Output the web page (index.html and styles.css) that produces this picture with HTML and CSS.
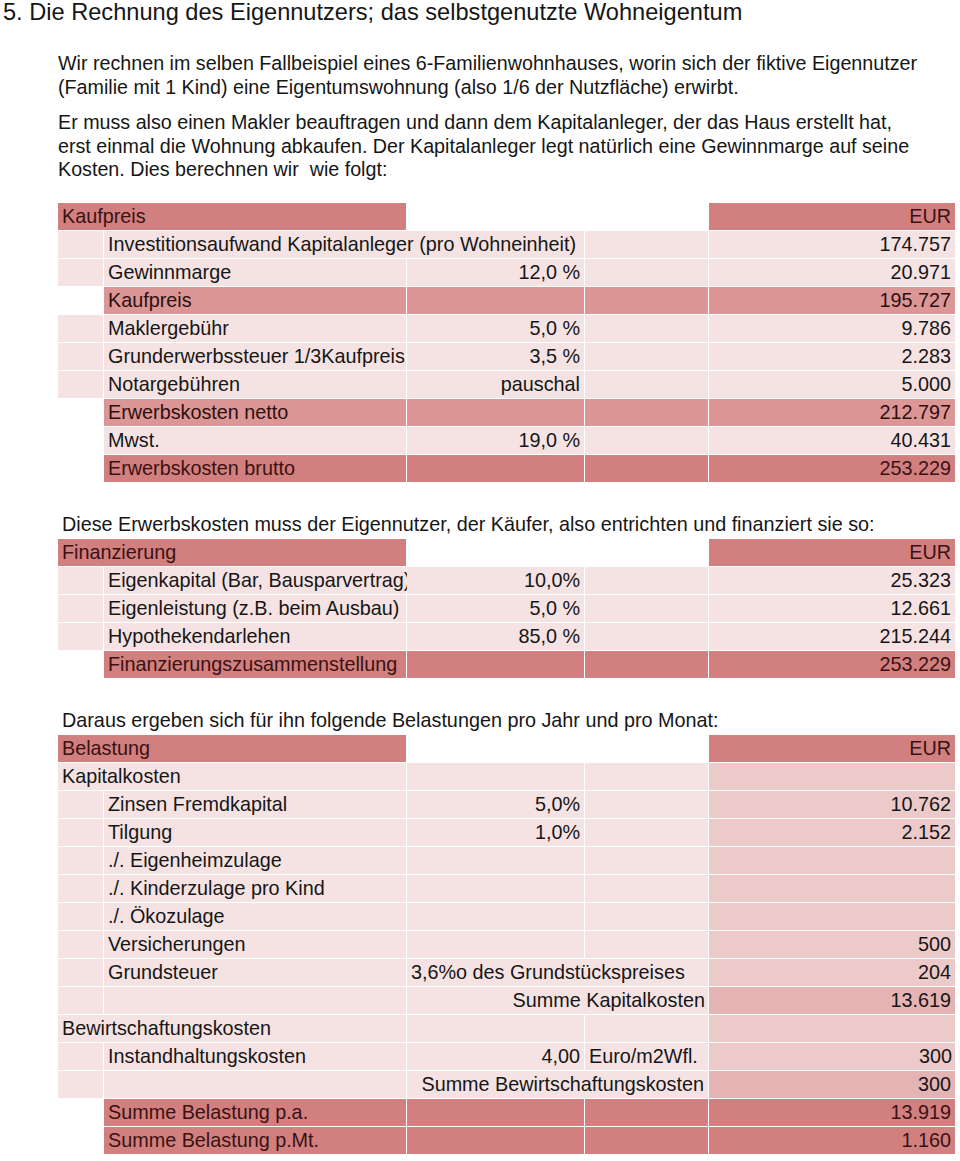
FILE: index.html
```html
<!DOCTYPE html>
<html lang="de">
<head>
<meta charset="utf-8">
<title>Die Rechnung des Eigennutzers</title>
<link rel="stylesheet" href="styles.css">
</head>
<body>
<h1 class="title">5. Die Rechnung des Eigennutzers; das selbstgenutzte Wohneigentum</h1>
<div class="intro">
  <p>Wir rechnen im selben Fallbeispiel eines 6-Familienwohnhauses, worin sich der fiktive Eigennutzer (Familie mit 1 Kind) eine Eigentumswohnung (also 1/6 der Nutzfläche) erwirbt.</p>
  <p>Er muss also einen Makler beauftragen und dann dem Kapitalanleger, der das Haus erstellt hat, erst einmal die Wohnung abkaufen. Der Kapitalanleger legt natürlich eine Gewinnmarge auf seine Kosten. Dies berechnen wir&nbsp; wie folgt:</p>
</div>

<div class="sheet t1">
  <div class="c d s2">Kaufpreis</div><div class="c"></div><div class="c"></div><div class="c d r">EUR</div>

  <div class="c l"></div><div class="c l s2">Investitionsaufwand Kapitalanleger (pro Wohneinheit)</div><div class="c l"></div><div class="c l r">174.757</div>

  <div class="c l"></div><div class="c l">Gewinnmarge</div><div class="c l r">12,0 %</div><div class="c l"></div><div class="c l r">20.971</div>

  <div class="c"></div><div class="c m">Kaufpreis</div><div class="c m"></div><div class="c m"></div><div class="c m r">195.727</div>

  <div class="c l"></div><div class="c l">Maklergebühr</div><div class="c l r">5,0 %</div><div class="c l"></div><div class="c l r">9.786</div>

  <div class="c l"></div><div class="c l">Grunderwerbssteuer 1/3Kaufpreis</div><div class="c l r">3,5 %</div><div class="c l"></div><div class="c l r">2.283</div>

  <div class="c l"></div><div class="c l">Notargebühren</div><div class="c l r">pauschal</div><div class="c l"></div><div class="c l r">5.000</div>

  <div class="c"></div><div class="c m">Erwerbskosten netto</div><div class="c m"></div><div class="c m"></div><div class="c m r">212.797</div>

  <div class="c"></div><div class="c l">Mwst.</div><div class="c l r">19,0 %</div><div class="c l"></div><div class="c l r">40.431</div>

  <div class="c"></div><div class="c d">Erwerbskosten brutto</div><div class="c d"></div><div class="c d"></div><div class="c d r">253.229</div>
</div>

<p class="caption">Diese Erwerbskosten muss der Eigennutzer, der Käufer, also entrichten und finanziert sie so:</p>

<div class="sheet">
  <div class="c d s2">Finanzierung</div><div class="c"></div><div class="c"></div><div class="c d r">EUR</div>

  <div class="c l"></div><div class="c l">Eigenkapital (Bar, Bausparvertrag)</div><div class="c l r">10,0%</div><div class="c l"></div><div class="c l r">25.323</div>

  <div class="c l"></div><div class="c l">Eigenleistung (z.B. beim Ausbau)</div><div class="c l r">5,0 %</div><div class="c l"></div><div class="c l r">12.661</div>

  <div class="c l"></div><div class="c l">Hypothekendarlehen</div><div class="c l r">85,0 %</div><div class="c l"></div><div class="c l r">215.244</div>

  <div class="c"></div><div class="c d">Finanzierungszusammenstellung</div><div class="c d"></div><div class="c d"></div><div class="c d r">253.229</div>
</div>

<p class="caption">Daraus ergeben sich für ihn folgende Belastungen pro Jahr und pro Monat:</p>

<div class="sheet">
  <div class="c d s2">Belastung</div><div class="c"></div><div class="c"></div><div class="c d r">EUR</div>

  <div class="c l s2">Kapitalkosten</div><div class="c l"></div><div class="c l"></div><div class="c k"></div>

  <div class="c l"></div><div class="c l">Zinsen Fremdkapital</div><div class="c l r">5,0%</div><div class="c l"></div><div class="c k r">10.762</div>

  <div class="c l"></div><div class="c l">Tilgung</div><div class="c l r">1,0%</div><div class="c l"></div><div class="c k r">2.152</div>

  <div class="c l"></div><div class="c l">./. Eigenheimzulage</div><div class="c l"></div><div class="c l"></div><div class="c k"></div>

  <div class="c l"></div><div class="c l">./. Kinderzulage pro Kind</div><div class="c l"></div><div class="c l"></div><div class="c k"></div>

  <div class="c l"></div><div class="c l">./. Ökozulage</div><div class="c l"></div><div class="c l"></div><div class="c k"></div>

  <div class="c l"></div><div class="c l">Versicherungen</div><div class="c l"></div><div class="c l"></div><div class="c k r">500</div>

  <div class="c l"></div><div class="c l">Grundsteuer</div><div class="c l s2">3,6%o des Grundstückspreises</div><div class="c k r">204</div>

  <div class="c l"></div><div class="c l"></div><div class="c l s2 r">Summe Kapitalkosten</div><div class="c s r">13.619</div>

  <div class="c l s2">Bewirtschaftungskosten</div><div class="c l"></div><div class="c l"></div><div class="c k"></div>

  <div class="c l"></div><div class="c l">Instandhaltungskosten</div><div class="c l r">4,00</div><div class="c l">Euro/m2Wfl.</div><div class="c k r">300</div>

  <div class="c l"></div><div class="c l"></div><div class="c l s2 r">Summe Bewirtschaftungskosten</div><div class="c s r">300</div>

  <div class="c"></div><div class="c d">Summe Belastung p.a.</div><div class="c d"></div><div class="c d"></div><div class="c d r">13.919</div>

  <div class="c"></div><div class="c d">Summe Belastung p.Mt.</div><div class="c d"></div><div class="c d"></div><div class="c d r">1.160</div>
</div>
</body>
</html>
```

FILE: styles.css
```css
* { box-sizing: border-box; }

html, body {
  margin: 0;
  padding: 0;
  background: #ffffff;
}

body {
  font-family: "Liberation Sans", Arial, Helvetica, sans-serif;
  color: #161616;
}

.title {
  margin: 0;
  padding-left: 3px;
  font-size: 23.6px;
  font-weight: normal;
  line-height: 24px;
}

.intro {
  margin: 28px 0 0 58px;
  width: 866px;
  font-size: 19.7px;
  line-height: 23.5px;
}

.intro p {
  margin: 0 0 12px 0;
}

.sheet {
  display: grid;
  grid-template-columns: 45px 302px 177px 123px 246px;
  grid-auto-rows: 27px;
  gap: 1px;
  margin-left: 58px;
  width: 897px;
  font-size: 19.8px;
}

.t1 {
  margin-top: 21px;
}

.c {
  line-height: 27px;
  padding: 0 4px;
  white-space: nowrap;
  overflow: visible;
}

.s2 { grid-column: span 2; }
.r { text-align: right; }

.l { background: #f5e3e3; }
.k { background: #edcaca; }
.s { background: #e4b3b3; }
.m { background: #dc9696; color: #2c1010; }
.d { background: #d27f7f; color: #3a1212; }

.sheet .c:nth-child(5n) { padding-right: 3px; }

.caption {
  margin: 29px 0 1px 62px;
  font-size: 19.8px;
  line-height: 27px;
}
```
